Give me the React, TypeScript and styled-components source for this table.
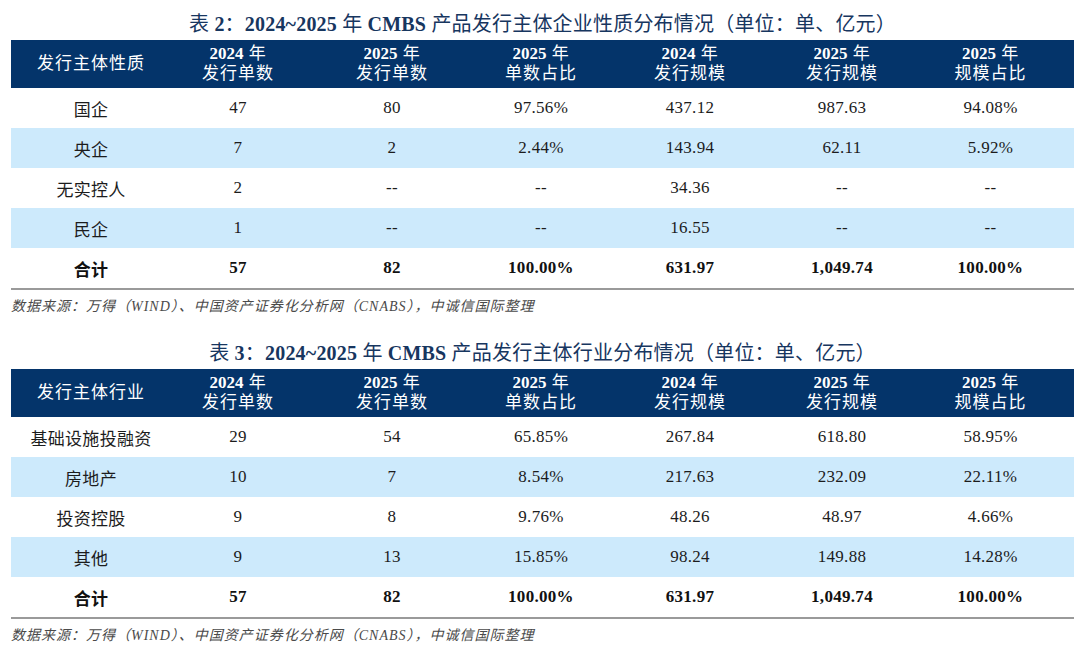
import styled, { createGlobalStyle } from 'styled-components';

const GlobalStyle = createGlobalStyle`
  body {
    margin: 0;
    background: #ffffff;
  }
`;

type Row = string[];

interface TableSpec {
  no: string;
  subject: string;
  firstHead: string;
  rows: Row[];
  total: Row;
}

const heads = [
  ['2024', '发行单数'],
  ['2025', '发行单数'],
  ['2025', '单数占比'],
  ['2024', '发行规模'],
  ['2025', '发行规模'],
  ['2025', '规模占比'],
];

const tables: TableSpec[] = [
  {
    no: '2',
    subject: '企业性质',
    firstHead: '发行主体性质',
    rows: [
      ['国企', '47', '80', '97.56%', '437.12', '987.63', '94.08%'],
      ['央企', '7', '2', '2.44%', '143.94', '62.11', '5.92%'],
      ['无实控人', '2', '--', '--', '34.36', '--', '--'],
      ['民企', '1', '--', '--', '16.55', '--', '--'],
    ],
    total: ['合计', '57', '82', '100.00%', '631.97', '1,049.74', '100.00%'],
  },
  {
    no: '3',
    subject: '行业',
    firstHead: '发行主体行业',
    rows: [
      ['基础设施投融资', '29', '54', '65.85%', '267.84', '618.80', '58.95%'],
      ['房地产', '10', '7', '8.54%', '217.63', '232.09', '22.11%'],
      ['投资控股', '9', '8', '9.76%', '48.26', '48.97', '4.66%'],
      ['其他', '9', '13', '15.85%', '98.24', '149.88', '14.28%'],
    ],
    total: ['合计', '57', '82', '100.00%', '631.97', '1,049.74', '100.00%'],
  },
];

const colWidths = [160, 134, 174, 124, 174, 130];

const App = () => {
  return (
    <Page>
      <GlobalStyle />
      {tables.map((t, i) => (
        <Block key={t.no} $first={i === 0}>
          <Title>
            表 <b>{t.no}</b>：<b>2024~2025</b> 年 <b>CMBS</b> 产品发行主体{t.subject}分布情况（单位：单、亿元）
          </Title>
          <Table>
            <colgroup>
              {colWidths.map((w, k) => (
                <col key={k} style={{ width: w }} />
              ))}
              <col />
            </colgroup>
            <thead>
              <tr>
                <HeadCell>{t.firstHead}</HeadCell>
                {heads.map(([year, label], k) => (
                  <HeadCell key={k}>
                    <b>{year}</b> 年
                    <br />
                    {label}
                  </HeadCell>
                ))}
              </tr>
            </thead>
            <tbody>
              {t.rows.map((r, k) => (
                <BodyRow key={k} $shaded={k % 2 === 1}>
                  {r.map((c, j) => (
                    <Cell key={j}>{c}</Cell>
                  ))}
                </BodyRow>
              ))}
              <TotalRow>
                {t.total.map((c, j) => (
                  <Cell key={j}>{c}</Cell>
                ))}
              </TotalRow>
            </tbody>
          </Table>
          <Source>数据来源：万得（WIND）、中国资产证券化分析网（CNABS），中诚信国际整理</Source>
        </Block>
      ))}
    </Page>
  );
};

export default App;

const Page = styled.div`
  width: 1080px;
  box-sizing: border-box;
  padding: 12px 6px 0 11px;
  font-family: 'Liberation Serif', 'Noto Sans CJK SC', serif;
  color: #1c1c1c;
`;

const Block = styled.section<{ $first: boolean }>`
  margin-top: ${(p) => (p.$first ? '0' : '24px')};
`;

const Title = styled.div`
  text-align: center;
  font-size: 20px;
  line-height: 24px;
  color: #17365f;
  margin-bottom: 4px;
  letter-spacing: 0.2px;

  b {
    font-weight: 700;
  }
`;

const Table = styled.table`
  width: 100%;
  border-collapse: collapse;
  table-layout: fixed;
  border-bottom: 2px solid #9a9a9a;
`;

const HeadCell = styled.th`
  background: #04346a;
  color: #ffffff;
  font-weight: 400;
  font-size: 17px;
  line-height: 20px;
  height: 48px;
  padding: 2px 0;
  box-sizing: border-box;
  text-align: center;
  letter-spacing: 1px;

  b {
    font-weight: 700;
    letter-spacing: 0;
  }
`;

const BodyRow = styled.tr<{ $shaded: boolean }>`
  background: ${(p) => (p.$shaded ? '#cdeafc' : '#ffffff')};
`;

const TotalRow = styled.tr`
  background: #ffffff;
  font-weight: 700;
  color: #111111;
`;

const Cell = styled.td`
  height: 40px;
  padding: 0;
  text-align: center;
  font-size: 17px;
  letter-spacing: 0.3px;
`;

const Source = styled.div`
  margin-top: 7px;
  font-size: 14px;
  line-height: 20px;
  font-style: italic;
  letter-spacing: 1px;
  color: #4a4a4a;
`;
